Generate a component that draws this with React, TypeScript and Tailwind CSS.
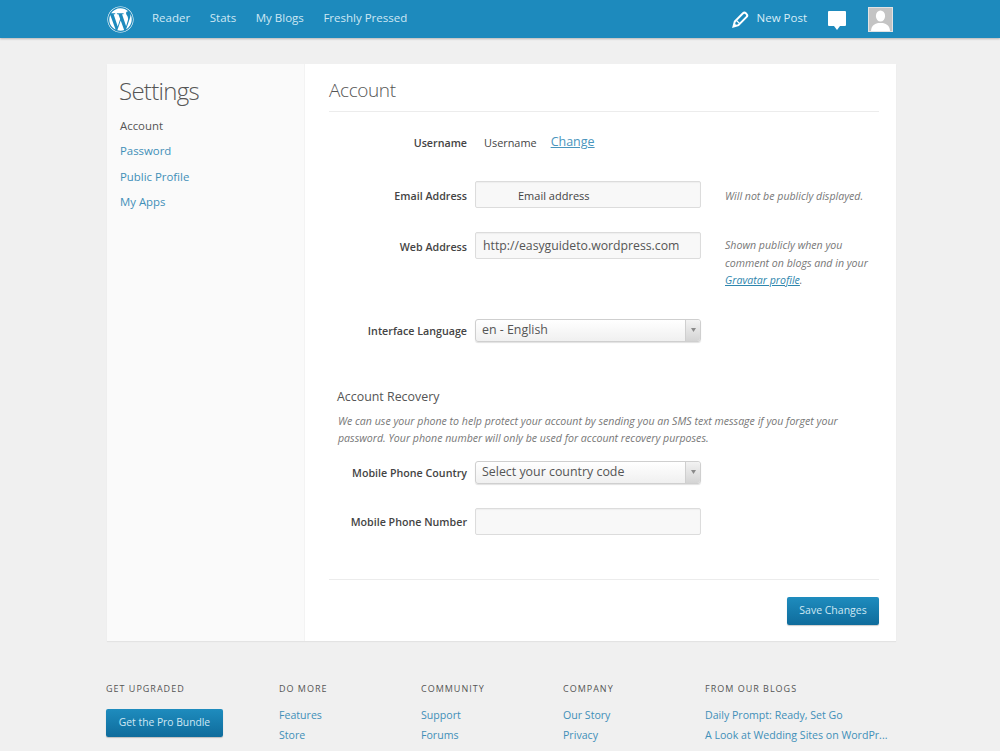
import { FaWordpress } from 'react-icons/fa';

const font = { fontFamily: '"Open Sans", sans-serif' };

const navLinks = ['Reader', 'Stats', 'My Blogs', 'Freshly Pressed'];
const sideLinks = ['Password', 'Public Profile', 'My Apps'];

const footerCols = [
  { title: 'DO MORE', width: 'w-[142px]', links: ['Features', 'Store', 'Themes'] },
  { title: 'COMMUNITY', width: 'w-[142px]', links: ['Support', 'Forums', 'Learn'] },
  { title: 'COMPANY', width: 'w-[142px]', links: ['Our Story', 'Privacy', 'Terms of Service'] },
  {
    title: 'FROM OUR BLOGS',
    width: 'w-[184px]',
    links: ['Daily Prompt: Ready, Set Go', 'A Look at Wedding Sites on WordPr...', 'Weekly Photo Challenge'],
  },
];

function Label({ children }: { children: string }) {
  return <div className="w-[138px] shrink-0 pt-[3px] text-right text-[10.7px] font-semibold text-[#444]">{children}</div>;
}

function TextBox({ children }: { children?: React.ReactNode }) {
  return (
    <div className="flex h-[27px] w-[226px] items-center rounded-[2px] border border-[#dcdcdc] bg-[#f8f8f8] shadow-[inset_0_1px_1px_rgba(0,0,0,0.04)]">
      {children}
    </div>
  );
}

function SelectBox({ value }: { value: string }) {
  return (
    <div className="flex h-[23px] w-[226px] items-center justify-between rounded-[3px] border border-[#cfcfcf] bg-gradient-to-b from-white to-[#f0f0f0] shadow-[0_1px_1px_rgba(0,0,0,0.12)]">
      <span className="pl-[6px] pt-[1px] text-[12.4px] text-[#555]">{value}</span>
      <span className="flex h-full w-[15px] items-center justify-center rounded-r-[3px] border-l border-[#cfcfcf] bg-gradient-to-b from-[#f2f2f2] to-[#d4d4d4]">
        <svg width="5" height="4" viewBox="0 0 5 4">
          <path d="M0 0h5L2.5 4z" fill="#8a8a8a" />
        </svg>
      </span>
    </div>
  );
}

export default function App() {
  return (
    <div className="h-[751px] overflow-hidden bg-[#f0f0f0]" style={font}>
      {/* Top bar */}
      <header className="flex h-[38px] items-center bg-[#1d8abd] pl-[107px] pr-[107px] shadow-[0_1px_2px_rgba(0,0,0,0.25)]">
        <FaWordpress className="text-white" size={27} />
        <nav className="ml-[18px] -mt-[2px] flex gap-[19.6px] text-[11.5px] text-[#cfe8f4]">
          {navLinks.map((l) => (
            <span key={l}>{l}</span>
          ))}
        </nav>
        <div className="ml-auto flex items-center">
          <svg width="18" height="18" viewBox="0 0 18 18" fill="none" stroke="white" strokeWidth="2">
            <path d="M1.500 16.500l1.300-5 8.200-8.200a2 2 0 0 1 2.800 0l.8.8a2 2 0 0 1 0 2.800l-8.200 8.200z" />
            <path d="M4.500 10.500l3.200 3.200" strokeWidth="1.200" />
            <path d="M1 17l1.200-4 2.800 2.800z" fill="white" stroke="none" />
          </svg>
          <span className="ml-[7px] -mt-[2px] text-[11.5px] text-[#d8edf7]">New Post</span>
          <svg className="ml-[21px] mt-[3px]" width="18" height="20" viewBox="0 0 18 20">
            <path d="M1 0h16a1 1 0 0 1 1 1v13a1 1 0 0 1-1 1h-5l-3 4-3-4H1a1 1 0 0 1-1-1V1a1 1 0 0 1 1-1z" fill="white" />
          </svg>
          <div className="ml-[22px] h-[25px] w-[25px] border border-[#e3e3e3] bg-[#c4c4c4]">
            <svg width="23" height="23" viewBox="0 0 23 23">
              <ellipse cx="11.500" cy="8" rx="4.600" ry="5.600" fill="white" />
              <path d="M2 23c.3-5 3-7 7-8h5c4 1 6.700 3 7 8z" fill="white" />
            </svg>
          </div>
        </div>
      </header>

      {/* Settings card */}
      <main className="ml-[107px] mt-[26px] flex h-[577px] w-[789px] bg-[#fafafa] shadow-[0_1px_1px_rgba(0,0,0,0.05)]">
        <aside className="w-[198px] shrink-0 border-r border-[#f3f3f3] pl-[13px]">
          <h1 className="-ml-[1px] mt-[9px] text-[24px] font-light leading-[36px] tracking-[-0.7px] text-[#555]">Settings</h1>
          <ul className="mt-[4px] text-[11.4px] leading-[25.400px] text-[#3f8fb8]">
            <li className="text-[#555]">Account</li>
            {sideLinks.map((l) => (
              <li key={l}>{l}</li>
            ))}
          </ul>
        </aside>

        <section className="flex-1 bg-white pl-[24px] pr-[17px]">
          <h2 className="flex h-[48px] items-end border-b border-[#ececec] pb-[7px] text-[19px] font-light tracking-[-0.4px] text-[#555]">
            Account
          </h2>

          <div className="mt-[20px] flex h-[22px] items-center gap-[8px]">
            <div className="-mt-[3px]">
              <Label>Username</Label>
            </div>
            <span className="ml-[9px] text-[10.9px] text-[#444]">Username</span>
            <span className="ml-[6px] -mt-[2px] text-[12.5px] text-[#4a95bd] underline">Change</span>
          </div>

          <div className="mt-[27px] flex items-center gap-[8px]">
            <Label>Email Address</Label>
            <TextBox>
              <span className="pl-[42px] pt-[3px] text-[11px] text-[#444]">Email address</span>
            </TextBox>
            <span className="ml-[16px] pt-[4px] text-[10.6px] italic text-[#777]">Will not be publicly displayed.</span>
          </div>

          <div className="mt-[24px] flex items-start gap-[8px]">
            <div className="flex h-[27px] items-center">
              <Label>Web Address</Label>
            </div>
            <TextBox>
              <span className="pl-[7px] pt-[2px] text-[12.25px] text-[#555]">http://easyguideto.wordpress.com</span>
            </TextBox>
            <p className="ml-[16px] w-[150px] pt-[5px] text-[10.6px] italic leading-[17.500px] text-[#777]">
              Shown publicly when you comment on blogs and in your{' '}
              <span className="text-[#2e86ad] underline">Gravatar profile</span>.
            </p>
          </div>

          <div className="mt-[29px] flex items-center gap-[8px]">
            <Label>Interface Language</Label>
            <SelectBox value="en - English" />
          </div>

          <h3 className="ml-[8px] mt-[46px] text-[12.4px] leading-[18px] text-[#555]">Account Recovery</h3>
          <p className="ml-[9px] mt-[7px] w-[520px] text-[10.6px] italic leading-[17px] text-[#777]">
            We can use your phone to help protect your account by sending you an SMS text message if you forget your
            password. Your phone number will only be used for account recovery purposes.
          </p>

          <div className="mt-[14px] flex items-center gap-[8px]">
            <Label>Mobile Phone Country</Label>
            <SelectBox value="Select your country code" />
          </div>

          <div className="mt-[24px] flex items-center gap-[8px]">
            <Label>Mobile Phone Number</Label>
            <TextBox />
          </div>

          <div className="mt-[44px] flex justify-end border-t border-[#ececec] pt-[17px]">
            <button className="h-[28px] w-[92px] rounded-[2px] bg-gradient-to-b from-[#1e8cbe] to-[#0f6c9c] text-[10.5px] text-[#cfe8f4] shadow-[0_1px_1px_rgba(0,0,0,0.2)]">
              Save Changes
            </button>
          </div>
        </section>
      </main>

      {/* Footer */}
      <footer className="ml-[106px] mt-[42px] flex">
        <div className="w-[173px] shrink-0">
          <h4 className="text-[9px] font-medium leading-[12px] tracking-[1px] text-[#555]">GET UPGRADED</h4>
          <button className="mt-[14px] h-[28px] w-[117px] rounded-[2px] bg-gradient-to-b from-[#1e8cbe] to-[#0f6c9c] text-[10.3px] text-[#cfe8f4] shadow-[0_1px_1px_rgba(0,0,0,0.2)]">
            Get the Pro Bundle
          </button>
        </div>
        {footerCols.map((col) => (
          <div key={col.title} className={`${col.width} shrink-0`}>
            <h4 className="text-[9px] font-medium leading-[12px] tracking-[1px] text-[#555]">{col.title}</h4>
            <ul className="mt-[10px] text-[10.6px] leading-[20px] text-[#3f8fb8]">
              {col.links.map((l) => (
                <li key={l} className="whitespace-nowrap">{l}</li>
              ))}
            </ul>
          </div>
        ))}
      </footer>
    </div>
  );
}
